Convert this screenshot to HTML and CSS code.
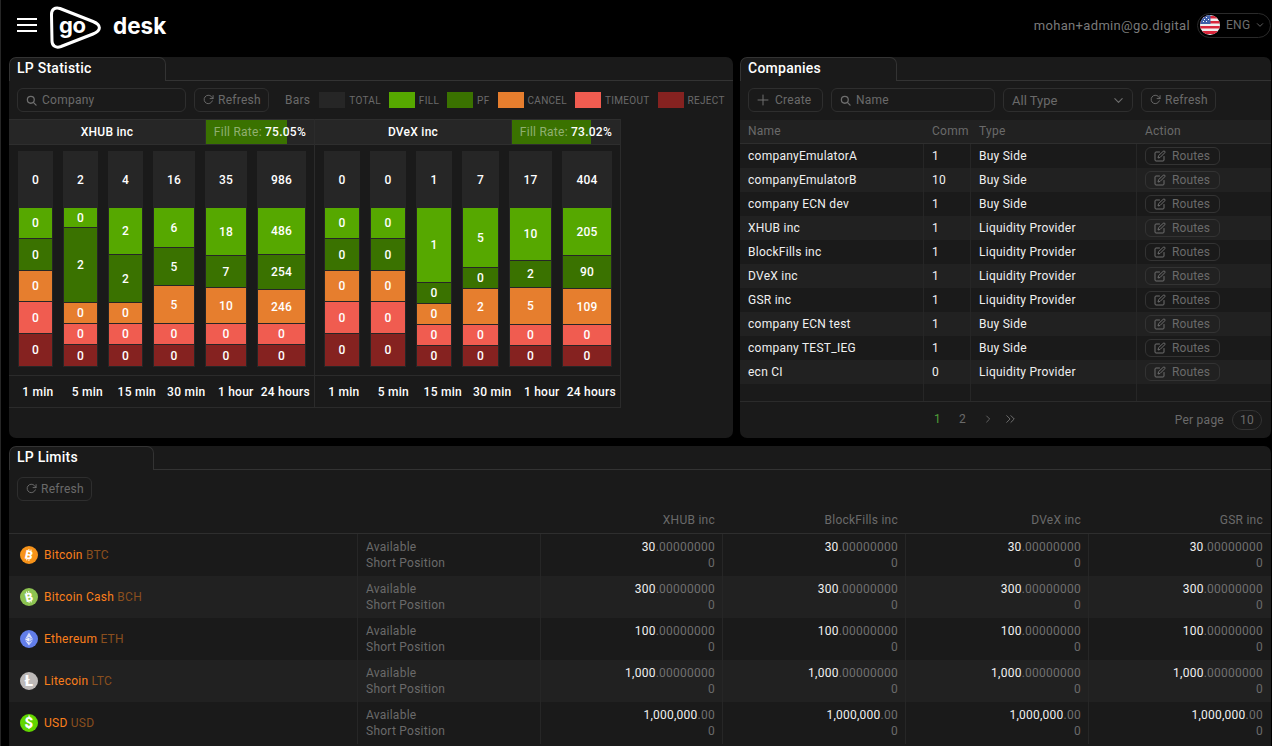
FILE: index.html
```html
<!DOCTYPE html>
<html lang="en">
<head>
<meta charset="utf-8">
<title>go desk</title>
<link rel="stylesheet" href="styles.css">
</head>
<body>
<svg class="defs" aria-hidden="true">
  <symbol id="i-refresh" viewBox="0 0 24 24"><path d="M22 3.500v6.500h-6.500"/><path d="M20.400 15a9.200 9.200 0 1 1-2.100-9.500L22 10"/></symbol>
  <symbol id="i-search" viewBox="0 0 24 24"><circle cx="10.500" cy="10.500" r="7.500"/><path d="M16 16l6 6"/></symbol>
  <symbol id="i-plus" viewBox="0 0 24 24"><path d="M12 2v20M2 12h20"/></symbol>
  <symbol id="i-edit" viewBox="0 0 24 24"><path d="M11 4H4a2 2 0 0 0-2 2v14a2 2 0 0 0 2 2h14a2 2 0 0 0 2-2v-7"/><path d="M18.500 2.500a2.100 2.100 0 0 1 3 3L12 15l-4 1 1-4z"/></symbol>
  <symbol id="i-chev" viewBox="0 0 24 24"><path d="M4 8l8 8 8-8"/></symbol>
  <symbol id="i-next" viewBox="0 0 24 24"><path d="M8 3l9 9-9 9"/></symbol>
  <symbol id="i-last" viewBox="0 0 24 24"><path d="M3 4l8 8-8 8M13 4l8 8-8 8"/></symbol>
</svg>
<div class="app">
  <header class="topbar">
    <div class="brand">
      <div class="burger"><span></span><span></span><span></span></div>
      <svg class="logo" width="54" height="46" viewBox="0 0 54 46">
        <path class="logo-shape" d="M2.500 10C2.200 4.500 6 1.800 11 3.500L44 16.500C52.500 20 52.500 25.500 44 29L12 41.500C7 43.300 3 41 3 36Z"/>
        <text class="logo-go" x="10" y="28">go</text>
      </svg>
      <span class="brand-name">desk</span>
    </div>
    <div class="account">
      <span class="email">mohan+admin@go.digital</span>
      <div class="lang">
        <svg class="flag" width="20" height="20" viewBox="0 0 20 20">
          <clipPath id="flagclip"><circle cx="10" cy="10" r="10"/></clipPath>
          <g clip-path="url(#flagclip)">
            <rect width="20" height="20" fill="#f0f0f0"/>
            <path d="M0 1h20v2.500H0zM0 6h20v2.500H0zM0 11h20v2.500H0zM0 16h20v3H0z" fill="#d9273c"/>
            <rect width="10.500" height="9" fill="#3f5fa8"/>
            <path d="M3 2h1v1H3zM6 2h1v1H6zM8 4h1v1H8zM4 4h1v1H4zM3 6h1v1H3zM6 6h1v1H6z" fill="#fff"/>
          </g>
        </svg>
        <span>ENG</span>
        <svg class="ico chev-sm"><use href="#i-chev"/></svg>
      </div>
    </div>
  </header>

  <main class="dash">
    <section class="panel">
      <div class="tabs"><div class="tab tab-wide">LP Statistic</div><div class="tab-rest"></div></div>
      <div class="toolbar">
        <div class="ctl search-company"><svg class="ico ico-s"><use href="#i-search"/></svg><span>Company</span></div>
        <div class="ctl btn"><svg class="ico ico-r"><use href="#i-refresh"/></svg><span>Refresh</span></div>
        <div class="legend">
          <span class="legend-title">Bars</span>
          <i class="sw c-total"></i><span class="lg">TOTAL</span>
          <i class="sw c-fill"></i><span class="lg">FILL</span>
          <i class="sw c-pf"></i><span class="lg">PF</span>
          <i class="sw c-cancel"></i><span class="lg">CANCEL</span>
          <i class="sw c-timeout"></i><span class="lg">TIMEOUT</span>
          <i class="sw c-reject"></i><span class="lg">REJECT</span>
        </div>
      </div>
      <div class="stats">
        <div class="lp">
          <div class="lp-head">
            <div class="lp-name">XHUB inc</div>
            <div class="rate"><div class="rate-bar" style="width:81px"></div><div class="rate-text"><em>Fill Rate:</em> 75.05%</div></div>
          </div>
          <div class="bars bars-a">
            <div class="bar"><div class="total">0</div><div class="seg c-fill" style="height:31px">0</div><div class="seg c-pf" style="height:32px">0</div><div class="seg c-cancel" style="height:31px">0</div><div class="seg c-timeout" style="height:32px">0</div><div class="seg c-reject" style="height:33px">0</div></div>
            <div class="bar"><div class="total">2</div><div class="seg c-fill" style="height:20px">0</div><div class="seg c-pf" style="height:75px">2</div><div class="seg c-cancel" style="height:21px">0</div><div class="seg c-timeout" style="height:21px">0</div><div class="seg c-reject" style="height:22px">0</div></div>
            <div class="bar"><div class="total">4</div><div class="seg c-fill" style="height:47px">2</div><div class="seg c-pf" style="height:48px">2</div><div class="seg c-cancel" style="height:21px">0</div><div class="seg c-timeout" style="height:21px">0</div><div class="seg c-reject" style="height:22px">0</div></div>
            <div class="bar"><div class="total">16</div><div class="seg c-fill" style="height:40px">6</div><div class="seg c-pf" style="height:38px">5</div><div class="seg c-cancel" style="height:38px">5</div><div class="seg c-timeout" style="height:21px">0</div><div class="seg c-reject" style="height:22px">0</div></div>
            <div class="bar"><div class="total">35</div><div class="seg c-fill" style="height:48px">18</div><div class="seg c-pf" style="height:32px">7</div><div class="seg c-cancel" style="height:36px">10</div><div class="seg c-timeout" style="height:21px">0</div><div class="seg c-reject" style="height:22px">0</div></div>
            <div class="bar"><div class="total">986</div><div class="seg c-fill" style="height:47px">486</div><div class="seg c-pf" style="height:35px">254</div><div class="seg c-cancel" style="height:34px">246</div><div class="seg c-timeout" style="height:21px">0</div><div class="seg c-reject" style="height:22px">0</div></div>
          </div>
          <div class="periods"><span>1 min</span><span>5 min</span><span>15 min</span><span>30 min</span><span>1 hour</span><span>24 hours</span></div>
        </div>
        <div class="lp">
          <div class="lp-head">
            <div class="lp-name">DVeX inc</div>
            <div class="rate"><div class="rate-bar" style="width:79px"></div><div class="rate-text"><em>Fill Rate:</em> 73.02%</div></div>
          </div>
          <div class="bars bars-b">
            <div class="bar"><div class="total">0</div><div class="seg c-fill" style="height:31px">0</div><div class="seg c-pf" style="height:32px">0</div><div class="seg c-cancel" style="height:31px">0</div><div class="seg c-timeout" style="height:32px">0</div><div class="seg c-reject" style="height:33px">0</div></div>
            <div class="bar"><div class="total">0</div><div class="seg c-fill" style="height:31px">0</div><div class="seg c-pf" style="height:32px">0</div><div class="seg c-cancel" style="height:31px">0</div><div class="seg c-timeout" style="height:32px">0</div><div class="seg c-reject" style="height:33px">0</div></div>
            <div class="bar"><div class="total">1</div><div class="seg c-fill" style="height:75px">1</div><div class="seg c-pf" style="height:21px">0</div><div class="seg c-cancel" style="height:21px">0</div><div class="seg c-timeout" style="height:21px">0</div><div class="seg c-reject" style="height:21px">0</div></div>
            <div class="bar"><div class="total">7</div><div class="seg c-fill" style="height:60px">5</div><div class="seg c-pf" style="height:21px">0</div><div class="seg c-cancel" style="height:36px">2</div><div class="seg c-timeout" style="height:21px">0</div><div class="seg c-reject" style="height:21px">0</div></div>
            <div class="bar"><div class="total">17</div><div class="seg c-fill" style="height:53px">10</div><div class="seg c-pf" style="height:27px">2</div><div class="seg c-cancel" style="height:37px">5</div><div class="seg c-timeout" style="height:21px">0</div><div class="seg c-reject" style="height:21px">0</div></div>
            <div class="bar"><div class="total">404</div><div class="seg c-fill" style="height:48px">205</div><div class="seg c-pf" style="height:33px">90</div><div class="seg c-cancel" style="height:36px">109</div><div class="seg c-timeout" style="height:21px">0</div><div class="seg c-reject" style="height:21px">0</div></div>
          </div>
          <div class="periods"><span>1 min</span><span>5 min</span><span>15 min</span><span>30 min</span><span>1 hour</span><span>24 hours</span></div>
        </div>
      </div>
    </section>

    <section class="panel">
      <div class="tabs"><div class="tab tab-wide">Companies</div><div class="tab-rest"></div></div>
      <div class="toolbar">
        <div class="ctl btn btn-create"><svg class="ico ico-plus"><use href="#i-plus"/></svg><span>Create</span></div>
        <div class="ctl search-name"><svg class="ico ico-s"><use href="#i-search"/></svg><span>Name</span></div>
        <div class="ctl select-type"><span>All Type</span><svg class="ico chev"><use href="#i-chev"/></svg></div>
        <div class="ctl btn"><svg class="ico ico-r"><use href="#i-refresh"/></svg><span>Refresh</span></div>
      </div>
      <div class="co-table">
        <div class="co-row co-head"><div>Name</div><div>Comm</div><div>Type</div><div>Action</div></div>
        <div class="co-row"><div>companyEmulatorA</div><div>1</div><div>Buy Side</div><div><span class="routes"><svg class="ico"><use href="#i-edit"/></svg>Routes</span></div></div>
        <div class="co-row"><div>companyEmulatorB</div><div>10</div><div>Buy Side</div><div><span class="routes"><svg class="ico"><use href="#i-edit"/></svg>Routes</span></div></div>
        <div class="co-row"><div>company ECN dev</div><div>1</div><div>Buy Side</div><div><span class="routes"><svg class="ico"><use href="#i-edit"/></svg>Routes</span></div></div>
        <div class="co-row"><div>XHUB inc</div><div>1</div><div>Liquidity Provider</div><div><span class="routes"><svg class="ico"><use href="#i-edit"/></svg>Routes</span></div></div>
        <div class="co-row"><div>BlockFills inc</div><div>1</div><div>Liquidity Provider</div><div><span class="routes"><svg class="ico"><use href="#i-edit"/></svg>Routes</span></div></div>
        <div class="co-row"><div>DVeX inc</div><div>1</div><div>Liquidity Provider</div><div><span class="routes"><svg class="ico"><use href="#i-edit"/></svg>Routes</span></div></div>
        <div class="co-row"><div>GSR inc</div><div>1</div><div>Liquidity Provider</div><div><span class="routes"><svg class="ico"><use href="#i-edit"/></svg>Routes</span></div></div>
        <div class="co-row"><div>company ECN test</div><div>1</div><div>Buy Side</div><div><span class="routes"><svg class="ico"><use href="#i-edit"/></svg>Routes</span></div></div>
        <div class="co-row"><div>company TEST_IEG</div><div>1</div><div>Buy Side</div><div><span class="routes"><svg class="ico"><use href="#i-edit"/></svg>Routes</span></div></div>
        <div class="co-row"><div>ecn CI</div><div>0</div><div>Liquidity Provider</div><div><span class="routes"><svg class="ico"><use href="#i-edit"/></svg>Routes</span></div></div>
        <div class="co-row co-filler"><div></div><div></div><div></div><div></div></div>
      </div>
      <div class="pager">
        <div class="pages"><span class="page-on">1</span><span>2</span><span><svg class="ico pg-ico"><use href="#i-next"/></svg></span><span class="pg-last"><svg class="ico pg-ico2"><use href="#i-last"/></svg></span></div>
        <div class="perpage"><span>Per page</span><span class="pill">10</span></div>
      </div>
    </section>

    <section class="panel panel-full">
      <div class="tabs"><div class="tab tab-narrow">LP Limits</div><div class="tab-rest"></div></div>
      <div class="toolbar"><div class="ctl btn"><svg class="ico ico-r"><use href="#i-refresh"/></svg><span>Refresh</span></div></div>
      <div class="lim-table">
        <div class="lim-row lim-head"><div></div><div></div><div>XHUB inc</div><div>BlockFills inc</div><div>DVeX inc</div><div>GSR inc</div></div>

        <div class="lim-row">
          <div class="coin"><svg class="coin-ico" viewBox="0 0 18 18"><circle cx="9" cy="9" r="9" fill="#f7931a"/><g transform="rotate(12 9 9)"><text x="9" y="13.300">B</text><path class="tick" d="M7.800 3.200v1.600M10 3.200v1.600M7.800 13.200v1.600M10 13.200v1.600"/></g></svg><span class="coin-name">Bitcoin <b>BTC</b></span></div>
          <div class="lbl"><span>Available</span><span>Short Position</span></div>
          <div class="val"><span>30<i>.00000000</i></span><span class="z">0</span></div>
          <div class="val"><span>30<i>.00000000</i></span><span class="z">0</span></div>
          <div class="val"><span>30<i>.00000000</i></span><span class="z">0</span></div>
          <div class="val"><span>30<i>.00000000</i></span><span class="z">0</span></div>
        </div>
        <div class="lim-row">
          <div class="coin"><svg class="coin-ico" viewBox="0 0 18 18"><circle cx="9" cy="9" r="9" fill="#8dc351"/><g transform="rotate(-14 9 9)"><text x="9" y="13.300">B</text><path class="tick" d="M7.800 3.200v1.600M10 3.200v1.600M7.800 13.200v1.600M10 13.200v1.600"/></g></svg><span class="coin-name">Bitcoin Cash <b>BCH</b></span></div>
          <div class="lbl"><span>Available</span><span>Short Position</span></div>
          <div class="val"><span>300<i>.00000000</i></span><span class="z">0</span></div>
          <div class="val"><span>300<i>.00000000</i></span><span class="z">0</span></div>
          <div class="val"><span>300<i>.00000000</i></span><span class="z">0</span></div>
          <div class="val"><span>300<i>.00000000</i></span><span class="z">0</span></div>
        </div>
        <div class="lim-row">
          <div class="coin"><svg class="coin-ico" viewBox="0 0 18 18"><circle cx="9" cy="9" r="9" fill="#627eea"/><path d="M9 2.500V7L5 9.300z" fill="#d5ddf9"/><path d="M9 2.500V7l4 2.300z" fill="#fff" opacity=".75"/><path d="M9 7.500L5 9.400 9 11.700z" fill="#eef1fd"/><path d="M9 7.500l4 1.900-4 2.300z" fill="#c0cbf6"/><path d="M5 10.200l4 5.300v-3z" fill="#e3e8fb"/><path d="M13 10.200l-4 5.300v-3z" fill="#c9d3f7"/></svg><span class="coin-name">Ethereum <b>ETH</b></span></div>
          <div class="lbl"><span>Available</span><span>Short Position</span></div>
          <div class="val"><span>100<i>.00000000</i></span><span class="z">0</span></div>
          <div class="val"><span>100<i>.00000000</i></span><span class="z">0</span></div>
          <div class="val"><span>100<i>.00000000</i></span><span class="z">0</span></div>
          <div class="val"><span>100<i>.00000000</i></span><span class="z">0</span></div>
        </div>
        <div class="lim-row">
          <div class="coin"><svg class="coin-ico" viewBox="0 0 18 18"><circle cx="9" cy="9" r="9" fill="#bdb9b8"/><text x="9" y="14" class="big">Ł</text></svg><span class="coin-name">Litecoin <b>LTC</b></span></div>
          <div class="lbl"><span>Available</span><span>Short Position</span></div>
          <div class="val"><span>1,000<i>.00000000</i></span><span class="z">0</span></div>
          <div class="val"><span>1,000<i>.00000000</i></span><span class="z">0</span></div>
          <div class="val"><span>1,000<i>.00000000</i></span><span class="z">0</span></div>
          <div class="val"><span>1,000<i>.00000000</i></span><span class="z">0</span></div>
        </div>
        <div class="lim-row">
          <div class="coin"><svg class="coin-ico" viewBox="0 0 18 18"><circle cx="9" cy="9" r="9" fill="#62d600"/><text x="9" y="14" class="big">$</text></svg><span class="coin-name">USD <b>USD</b></span></div>
          <div class="lbl"><span>Available</span><span>Short Position</span></div>
          <div class="val"><span>1,000,000<i>.00</i></span><span class="z">0</span></div>
          <div class="val"><span>1,000,000<i>.00</i></span><span class="z">0</span></div>
          <div class="val"><span>1,000,000<i>.00</i></span><span class="z">0</span></div>
          <div class="val"><span>1,000,000<i>.00</i></span><span class="z">0</span></div>
        </div>
      </div>
    </section>
  </main>
</div>
</body>
</html>
```

FILE: styles.css
```css
* { box-sizing: border-box; }
html, body { margin: 0; height: 100%; background: #000; overflow: hidden; }
body { font-family: Roboto, "Liberation Sans", sans-serif; font-size: 12px; letter-spacing: .25px; color: #fff; }
.defs { display: none; }
.app { height: 746px; overflow: hidden; border-left: 1px solid #262626; }

.ico { width: 12px; height: 12px; flex: none; fill: none; stroke: #6e6e6e; stroke-width: 2; stroke-linecap: round; stroke-linejoin: round; }
.ico-s { width: 11px; height: 11px; stroke-width: 2.800; }
.ico-r { width: 11px; height: 11px; stroke-width: 2; margin-top: -2px; }

.topbar { height: 57px; display: flex; justify-content: space-between; align-items: center; padding: 0 1px 7px 16px; }
.brand { display: flex; align-items: center; }
.burger { width: 20px; display: flex; flex-direction: column; gap: 4px; margin-right: 12px; }
.burger span { height: 2px; background: #fff; }
.logo { display: block; margin-top: 6px; }
.logo-shape { fill: none; stroke: #fff; stroke-width: 3; stroke-linejoin: round; }
.logo-go { font-family: Inter, sans-serif; font-weight: 700; font-size: 22px; fill: #fff; letter-spacing: -.3px; }
.brand-name { font-family: Inter, sans-serif; font-weight: 700; font-size: 22.500px; margin-left: 10px; letter-spacing: 0; margin-top: 1px; }
.account { display: flex; align-items: center; gap: 7px; }
.email { font-size: 13px; color: #7a7a7a; letter-spacing: .33px; }
.lang { width: 74px; height: 25px; border: 1px solid #2a2a2a; border-radius: 13px; display: flex; align-items: center; padding-left: 2px; color: #6e6e6e; font-size: 12px; gap: 6px; }
.flag { flex: none; }
.chev-sm { width: 8px; height: 8px; stroke-width: 2.600; }

.dash { display: grid; grid-template-columns: 724px 531px; grid-template-rows: 381px 320px; column-gap: 7px; row-gap: 8px; padding-left: 8px; }
.panel { background: #1a1a1a; border-radius: 7px; overflow: hidden; }
.panel-full { grid-column: 1 / -1; }

.tabs { display: flex; height: 24px; }
.tab { height: 24px; padding-left: 7px; font-size: 14px; line-height: 21px; font-weight: 500; letter-spacing: .25px; color: #fff; border: 1px solid #333; border-bottom: 0; border-radius: 7px 7px 0 0; }
.tab-wide { width: 157px; }
.tab-narrow { width: 145px; }
.tab-rest { flex: 1; border-bottom: 1px solid #333; }

.toolbar { display: flex; align-items: center; gap: 8px; padding: 7px 8px 0; height: 31px; }
.ctl { height: 24px; display: flex; align-items: center; border: 1px solid #2e2e2e; border-radius: 6px; color: #6a6a6a; font-size: 12px; flex: none; }
.search-company { width: 169px; padding-left: 8px; gap: 5px; }
.search-name { width: 164px; padding-left: 8px; gap: 5px; }
.btn { width: 75px; padding-left: 8px; gap: 4px; }
.btn-create { gap: 6px; }
.ico-plus { width: 12px; height: 12px; stroke-width: 2; }
.select-type { width: 130px; padding: 0 8px; justify-content: space-between; font-size: 13px; letter-spacing: 0; }
.chev { width: 11px; height: 11px; stroke-width: 2.400; }
.legend { display: flex; align-items: center; margin-left: 8px; }
.legend-title { color: #6a6a6a; margin-right: 9px; }
.sw { width: 26px; height: 16px; margin-right: 4px; flex: none; }
.lg { font-size: 10px; color: #6a6a6a; letter-spacing: .3px; margin-right: 8px; white-space: nowrap; }

.c-total { background: #262626; }
.c-fill { background: #56a800; }
.c-pf { background: #3a7200; }
.c-cancel { background: #e67e2e; }
.c-timeout { background: #f05c50; }
.c-reject { background: #852220; }

.stats { display: flex; margin-top: 7px; }
.lp { width: 306px; border-right: 1px solid #2b2b2b; }
.lp-head { display: flex; height: 26px; background: #262626; border-top: 1px solid #2e2e2e; border-bottom: 1px solid #2e2e2e; }
.lp-name { flex: 1; text-align: center; line-height: 24px; font-weight: 500; }
.rate { width: 109px; position: relative; line-height: 24px; text-align: right; padding-right: 8px; font-weight: 500; border-left: 1px solid #2e2e2e; }
.rate-bar { position: absolute; left: 0; top: 0; bottom: 0; background: #3a7200; }
.rate-text { position: relative; }
.rate-text em { font-style: normal; font-weight: 400; color: rgba(255,255,255,.45); }

.bars { display: grid; column-gap: 10px; padding: 6px 0 8px 9px; }
.bars-a { grid-template-columns: 35px 35px 35px 42px 42px 49px; }
.bars-b { grid-template-columns: 36px 36px 36px 37px 43px 50px; }
.bar { background: #262626; padding: 0 1px; }
.total { height: 57px; display: flex; align-items: center; justify-content: center; font-weight: 500; color: #fff; }
.seg { display: flex; align-items: center; justify-content: center; border-bottom: 1px solid #262626; font-weight: 500; color: #fff; }

.periods { display: grid; grid-template-columns: repeat(6, 1fr); height: 33px; padding: 0 4px; border-top: 1px solid #2b2b2b; border-bottom: 1px solid #2b2b2b; align-items: center; text-align: center; font-weight: 500; white-space: nowrap; }

.co-table { margin-top: 8px; }
.co-row { display: grid; grid-template-columns: 184px 47px 166px 134px; height: 24px; align-items: stretch; }
.co-row > div { padding-left: 8px; line-height: 24px; overflow: hidden; white-space: nowrap; border-right: 1px solid #262626; }
.co-row > div:last-child { border-right: 0; }
.co-row:nth-child(odd) { background: #212121; }
.co-head { color: #6a6a6a; border-bottom: 1px solid #2e2e2e; }
.co-row.co-head > div { border-right: 0; line-height: 22px; }
.co-row:not(.co-head) > div { color: #f0f0f0; }
.co-filler { height: 18px; border-bottom: 1px solid #2b2b2b; background: #1a1a1a !important; }
.co-row .routes { display: inline-flex; align-items: center; width: 75px; height: 18px; border: 1px solid #333; border-radius: 6px; color: #6a6a6a; padding-left: 8px; gap: 6px; line-height: 16px; vertical-align: top; margin-top: 3px; letter-spacing: .1px; }
.routes .ico { width: 12px; height: 12px; }

.pager { display: flex; justify-content: space-between; align-items: center; height: 36px; padding: 0 9px 0 185px; color: #6a6a6a; }
.pages { display: flex; margin-top: -3px; }
.pages span { width: 25px; display: flex; justify-content: center; align-items: center; }
.pages .pg-last { width: 20px; }
.pages .page-on { color: #4f9e38; }
.pg-ico { width: 8px; height: 10px; stroke-width: 2.600; }
.pg-ico2 { width: 11px; height: 10px; stroke-width: 2.400; }
.perpage { display: flex; align-items: center; gap: 8px; }
.pill { height: 20px; width: 30px; border: 1px solid #333; border-radius: 10px; text-align: center; line-height: 18px; }

.lim-table { margin-top: 10px; }
.lim-row { display: grid; grid-template-columns: 348px 183px 182px 183px 183px 182px; height: 42px; }
.lim-row:nth-child(odd) { background: #212121; }
.lim-head { height: 23px; background: transparent !important; border-bottom: 1px solid #2e2e2e; color: #6a6a6a; text-align: right; }
.lim-head > div { padding-right: 7px; line-height: 18px; }
.coin { display: flex; align-items: center; padding-left: 11px; gap: 6px; }
.coin-ico { width: 18px; height: 18px; flex: none; }
.coin-ico text { font-family: Roboto, sans-serif; font-size: 12px; font-weight: 900; fill: #fff; text-anchor: middle; }
.coin-ico text.big { font-size: 15px; }
.coin-ico .tick { stroke: #fff; stroke-width: 1; fill: none; }
.coin-name { color: #fa7f1c; }
.coin-name b { font-weight: 400; color: #8a4f1e; }
.lbl, .val { display: flex; flex-direction: column; justify-content: center; line-height: 16px; border-left: 1px solid #262626; padding: 0 7px 0 8px; }
.lbl { color: #6a6a6a; }
.val { text-align: right; color: #f0f0f0; }
.val i { font-style: normal; color: #707070; }
.z { color: #6a6a6a; }
```
